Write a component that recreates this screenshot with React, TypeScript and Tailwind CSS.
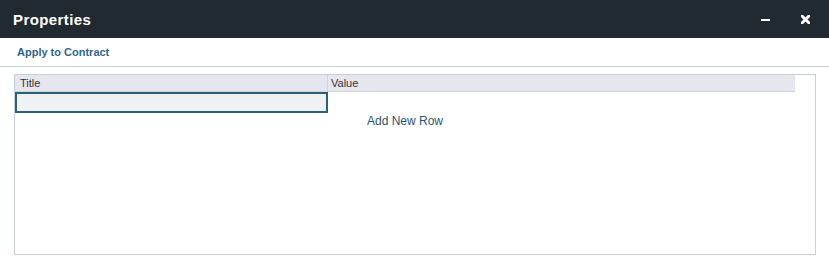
const App = () => {
  return (
    <div className="w-[829px] h-[266px] bg-white flex flex-col font-['Liberation_Sans',Arial,sans-serif]">
      {/* title bar */}
      <div className="h-[38px] bg-[#222a31] flex items-center pl-[13px] pr-[19px]">
        <h1 className="text-white text-[15px] font-bold tracking-[0.4px] leading-none">Properties</h1>
        <div className="ml-auto flex items-center gap-[31px]">
          <svg width="9" height="9" viewBox="0 0 9 9" className="mt-[1px]">
            <rect x="0" y="4" width="9" height="2" fill="#fff" />
          </svg>
          <svg width="9" height="9" viewBox="0 0 9 9">
            <path d="M1.2 1.2 L7.8 7.8 M7.8 1.2 L1.2 7.8" stroke="#fff" strokeWidth="3" strokeLinecap="square" />
          </svg>
        </div>
      </div>

      {/* toolbar */}
      <div className="h-[29px] border-b border-[#c9cfd8] flex items-center pl-[17px]">
        <span className="text-[11px] font-bold text-[#2f6589]">Apply to Contract</span>
      </div>

      {/* grid */}
      <div className="pl-[14px] pt-[7px]">
        <div className="w-[802px] h-[181px] border border-[#c8ced6] bg-white">
          <div className="w-[780px] h-[17px] bg-[#e6e6ee] border-b border-[#cfd3da] flex text-[11px] text-[#333] leading-[16px]">
            <div className="w-[313px] border-r border-[#cfd3da] pl-[5px]">Title</div>
            <div className="pl-[3px]">Value</div>
          </div>
          <div className="w-[313px] h-[21px] border-2 border-[#2d5f78] bg-[#f0f1f3]" />
          <div className="w-[780px] flex justify-center -mt-[1px]">
            <span className="text-[12px] text-[#2b5570]">Add New Row</span>
          </div>
        </div>
      </div>
    </div>
  );
};

export default App;
